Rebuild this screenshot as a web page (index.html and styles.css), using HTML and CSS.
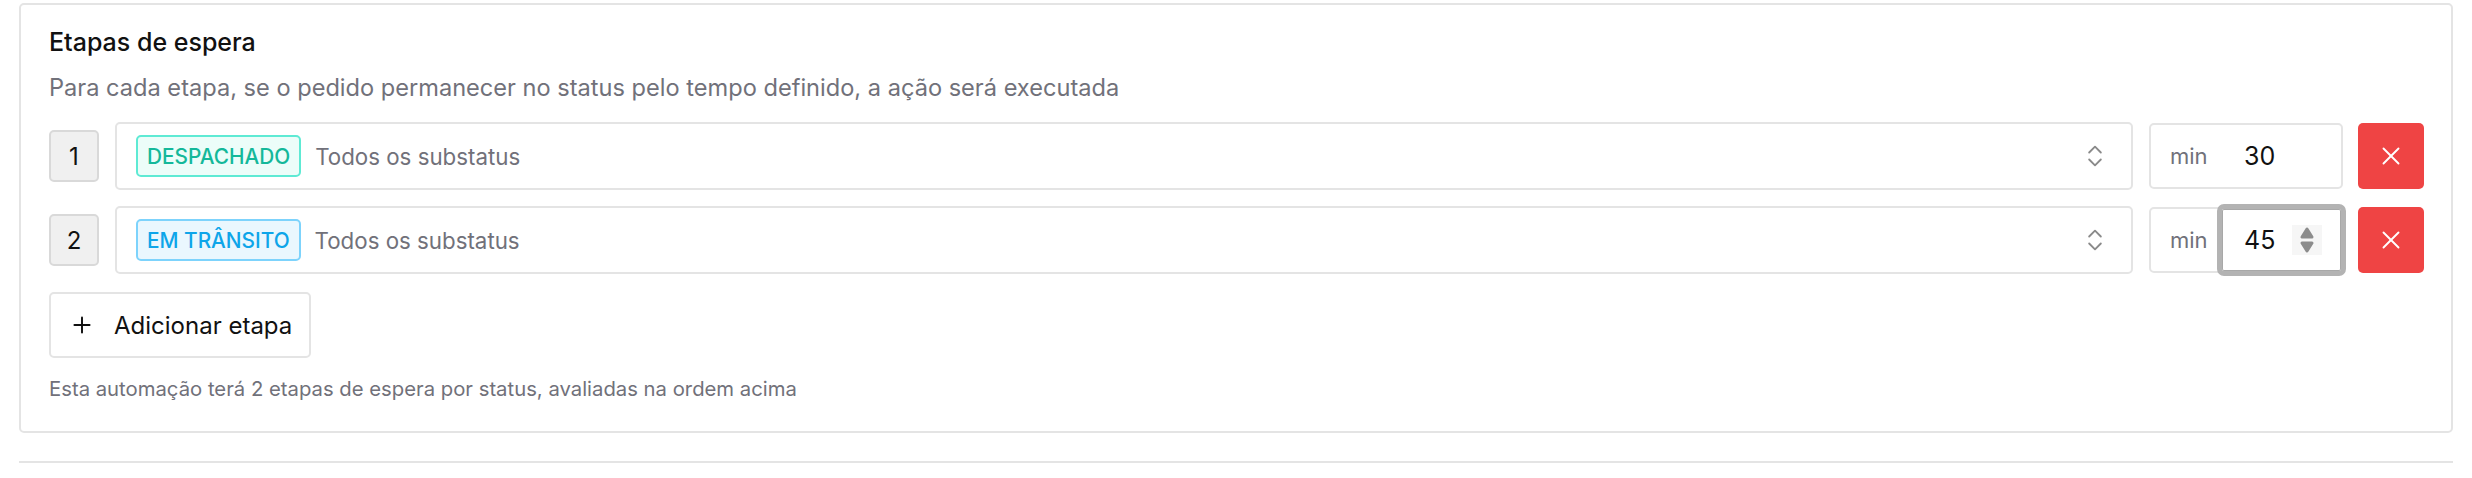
FILE: index.html
```html
<!DOCTYPE html>
<html lang="pt-BR">
<head>
<meta charset="utf-8">
<title>Etapas de espera</title>
<link rel="stylesheet" href="styles.css">
</head>
<body>
<div class="card">
  <h2 class="title">Etapas de espera</h2>
  <p class="subtitle">Para cada etapa, se o pedido permanecer no status pelo tempo definido, a ação será executada</p>
  <div class="steps">
    <div class="step">
      <div class="step-num">1</div>
      <div class="status-select">
        <span class="tag tag-teal">DESPACHADO</span>
        <span class="sub">Todos os substatus</span>
        <svg class="chev" viewBox="0 0 24 24" fill="none" stroke="currentColor" stroke-width="1.6" stroke-linecap="round" stroke-linejoin="round"><path d="m7 15 5 5 5-5"/><path d="m7 9 5-5 5 5"/></svg>
      </div>
      <div class="duration">
        <span class="unit">min</span>
        <div class="num">30</div>
      </div>
      <button class="del" type="button"><svg viewBox="0 0 24 24" fill="none" stroke="currentColor" stroke-width="1.5" stroke-linecap="round"><path d="M18 6 6 18"/><path d="m6 6 12 12"/></svg></button>
    </div>
    <div class="step">
      <div class="step-num">2</div>
      <div class="status-select">
        <span class="tag tag-blue">EM TRÂNSITO</span>
        <span class="sub">Todos os substatus</span>
        <svg class="chev" viewBox="0 0 24 24" fill="none" stroke="currentColor" stroke-width="1.6" stroke-linecap="round" stroke-linejoin="round"><path d="m7 15 5 5 5-5"/><path d="m7 9 5-5 5 5"/></svg>
      </div>
      <div class="duration">
        <span class="unit">min</span>
        <div class="num focused">45<span class="spin"><svg viewBox="0 0 16 28"><path d="M8 3 3 11h10z" fill="#8c8c8c" stroke="#8c8c8c" stroke-width="3" stroke-linejoin="round"/><path d="M8 25 3 17h10z" fill="#8c8c8c" stroke="#8c8c8c" stroke-width="3" stroke-linejoin="round"/></svg></span></div>
      </div>
      <button class="del" type="button"><svg viewBox="0 0 24 24" fill="none" stroke="currentColor" stroke-width="1.5" stroke-linecap="round"><path d="M18 6 6 18"/><path d="m6 6 12 12"/></svg></button>
    </div>
  </div>
  <button class="add" type="button"><svg class="plus" viewBox="0 0 24 24" fill="none" stroke="currentColor" stroke-width="1.8" stroke-linecap="round"><path d="M5 12h14"/><path d="M12 5v14"/></svg><span>Adicionar etapa</span></button>
  <p class="footer">Esta automação terá 2 etapas de espera por status, avaliadas na ordem acima</p>
</div>
<div class="divider"></div>
</body>
</html>
```

FILE: styles.css
```css
* { box-sizing: border-box; }
body {
  margin: 0;
  background: #ffffff;
  font-family: Inter, "Noto Sans", Arial, sans-serif;
  color: #111111;
}
.card {
  margin: 3px 19px 0 19px;
  border: 2px solid #e4e4e4;
  border-radius: 5px;
  padding: 22px 27px 28px 28px;
  height: 430px;
}
.title {
  margin: 0;
  font-size: 25px;
  font-weight: 500;
  line-height: 30px;
  color: #111111;
}
.subtitle {
  margin: 17px 0 0 0;
  font-size: 23.6px;
  line-height: 28px;
  color: #71717a;
}
.steps {
  margin-top: 20px;
  display: flex;
  flex-direction: column;
  gap: 16px;
}
.step {
  display: flex;
  align-items: center;
  gap: 16px;
  height: 68px;
}
.step-num {
  width: 50px;
  height: 52px;
  flex: none;
  display: flex;
  align-items: center;
  justify-content: center;
  background: #f0f0f0;
  border: 2px solid #d9d9d9;
  border-radius: 5px;
  font-size: 24px;
  color: #111111;
}
.status-select {
  flex: 1;
  height: 68px;
  display: flex;
  align-items: center;
  border: 2px solid #e4e4e4;
  border-radius: 5px;
  padding: 0 22px 0 19px;
}
.tag {
  height: 42px;
  display: flex;
  align-items: center;
  padding: 0 9px;
  border: 2px solid;
  border-radius: 5px;
  font-size: 20.8px;
  font-weight: 500;
  letter-spacing: 0;
}
.tag-teal { color: #14b89a; border-color: #5eead4; background: #ecfdf9; }
.tag-blue { color: #0ea5e9; border-color: #7dd3fc; background: #eaf7fe; }
.sub {
  margin-left: 14px;
  font-size: 22.3px;
  color: #71717a;
  flex: 1;
}
.chev {
  width: 28px;
  height: 28px;
  color: #8a8a8a;
  flex: none;
}
.duration {
  width: 194px;
  height: 66px;
  flex: none;
  display: flex;
  align-items: stretch;
  border: 2px solid #e4e4e4;
  border-radius: 5px;
}
.unit {
  width: 71px;
  display: flex;
  align-items: center;
  padding-left: 19px;
  font-size: 22px;
  color: #71717a;
}
.num {
  flex: 1;
  display: flex;
  align-items: center;
  padding-left: 22px;
  font-size: 25px;
  color: #111111;
  position: relative;
}
.num.focused {
  outline: 5px solid #b3b3b3;
  outline-offset: 0;
  border-radius: 2px;
  box-shadow: inset 0 0 0 1px #a8a8a8;
}
.spin {
  margin-left: 17px;
  width: 30px;
  height: 30px;
  background: #f6f6f6;
  display: flex;
  align-items: center;
  justify-content: center;
}
.spin svg { width: 16px; height: 28px; }
.del {
  width: 66px;
  height: 66px;
  flex: none;
  margin-left: -1px;
  border: none;
  border-radius: 5px;
  background: #ef4444;
  color: #ffffff;
  display: flex;
  align-items: center;
  justify-content: center;
  padding: 0;
}
.del svg { width: 30px; height: 30px; }
.add {
  margin-top: 18px;
  height: 66px;
  width: 262px;
  display: flex;
  align-items: center;
  padding: 0 0 0 18px;
  background: #ffffff;
  border: 2px solid #e4e4e4;
  border-radius: 5px;
  font-family: inherit;
  font-size: 24px;
  color: #111111;
  gap: 19px;
}
.plus { width: 26px; height: 26px; }
.footer {
  margin: 19px 0 0 0;
  font-size: 20.3px;
  line-height: 24px;
  color: #71717a;
}
.divider {
  margin: 28px 19px 0 19px;
  height: 2px;
  background: #e4e4e4;
}
```
